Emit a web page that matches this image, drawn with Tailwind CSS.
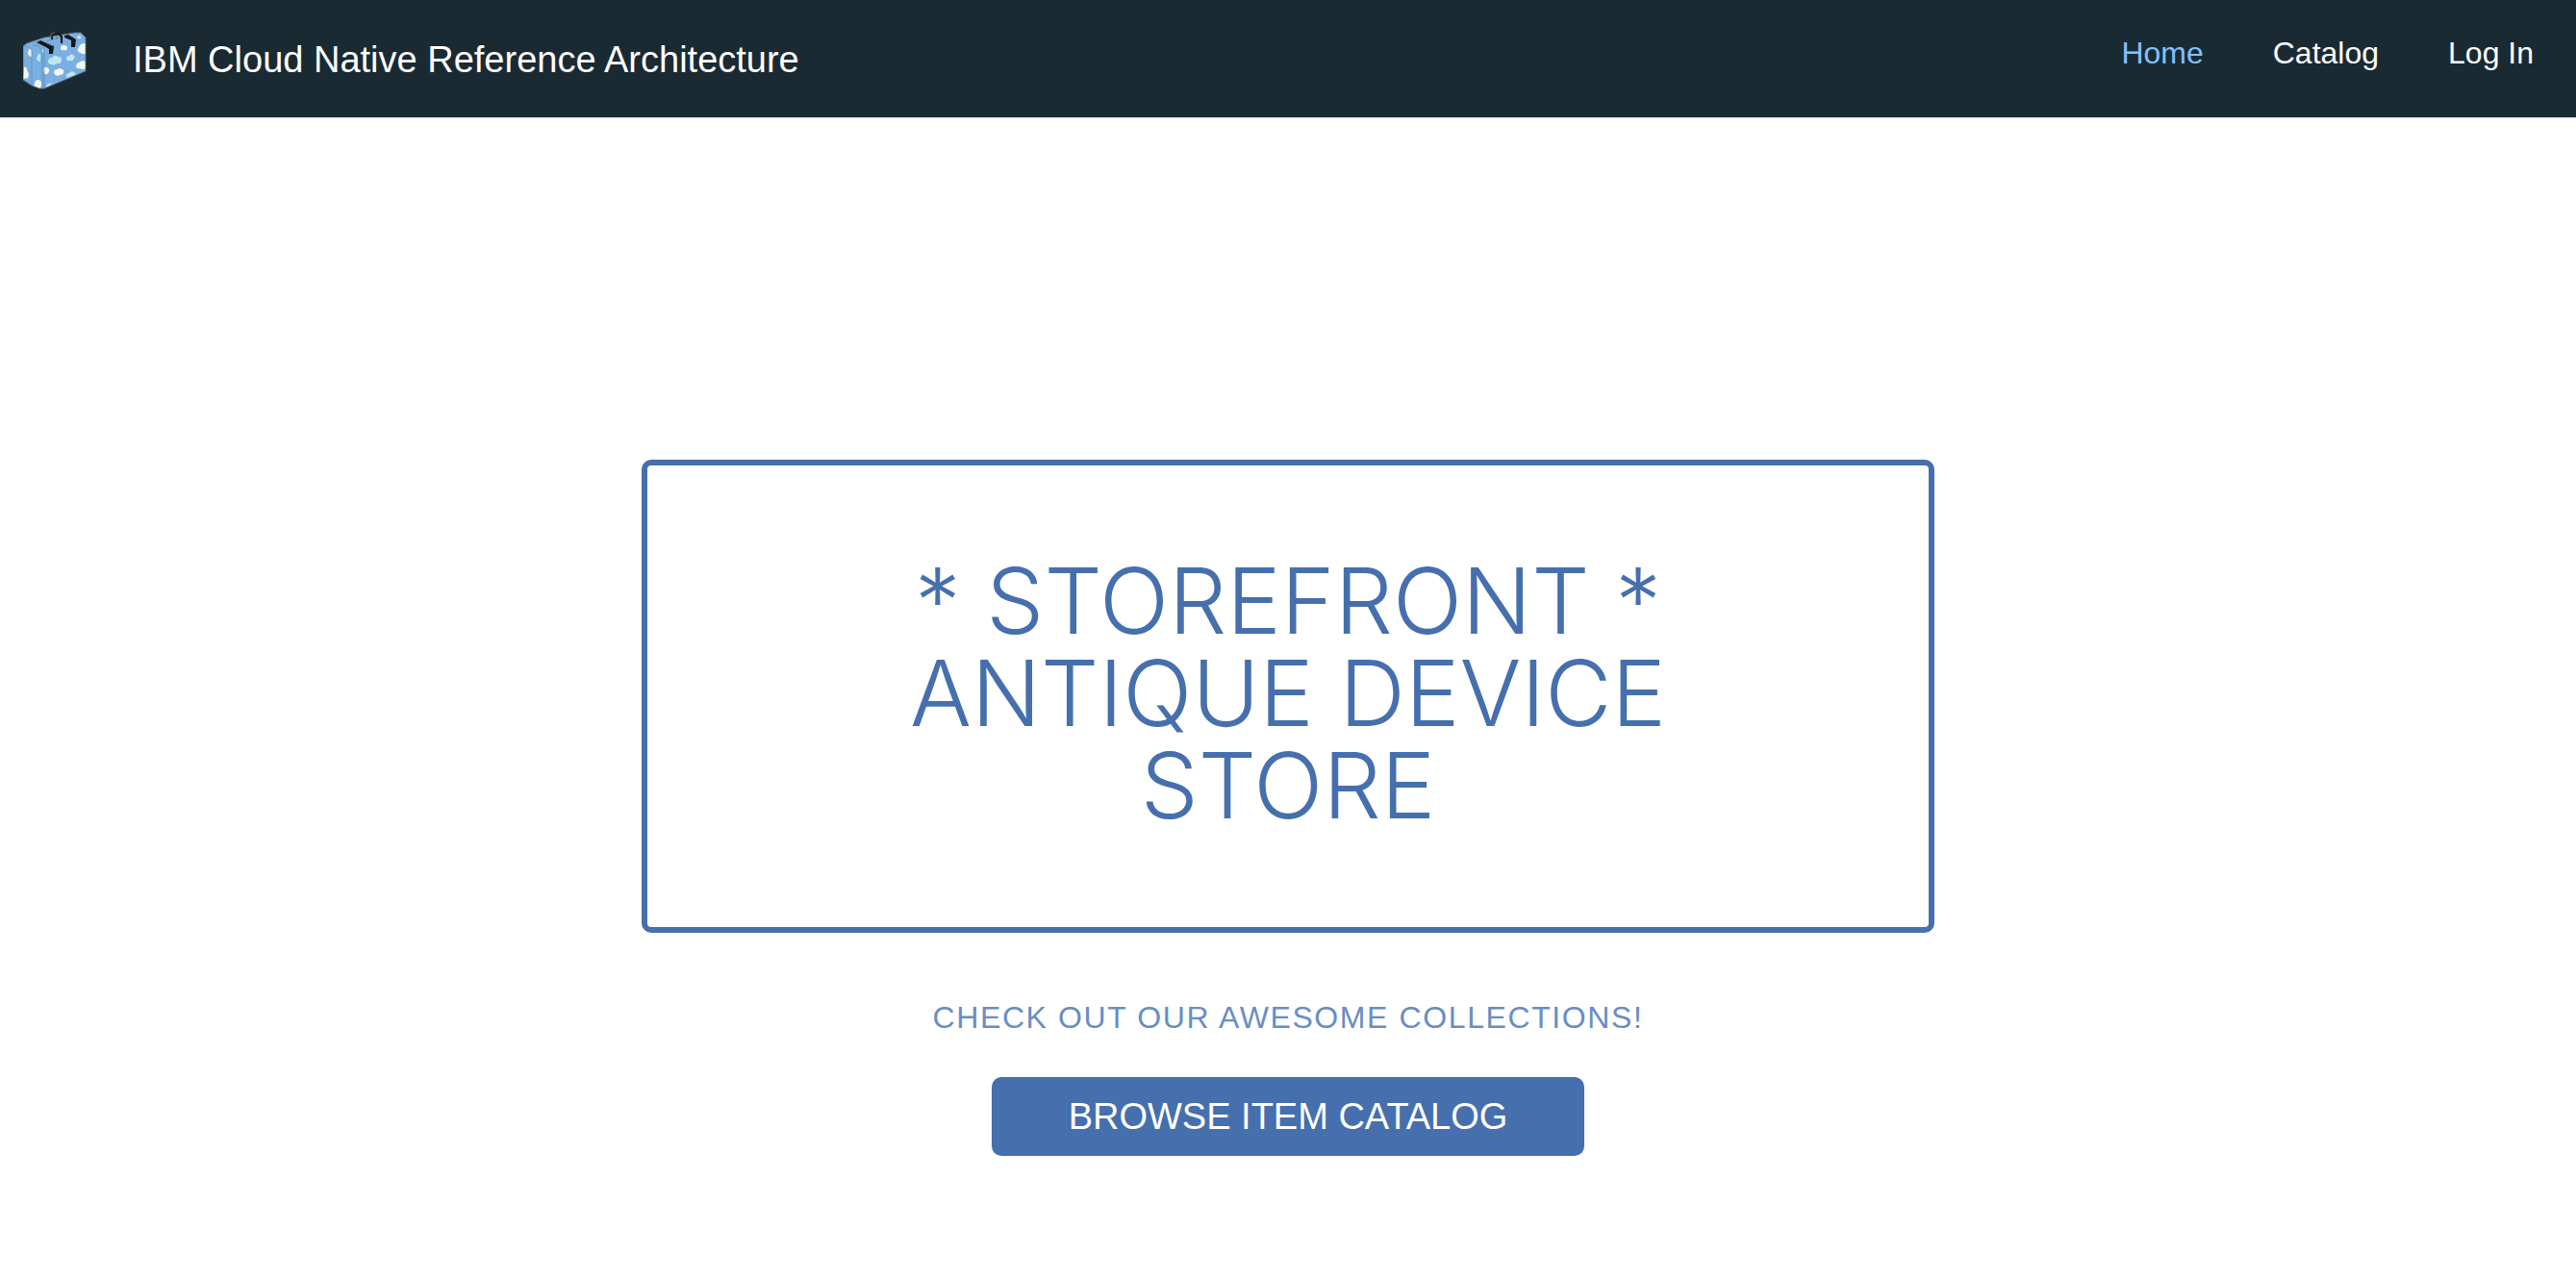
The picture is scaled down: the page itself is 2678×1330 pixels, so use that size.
<!DOCTYPE html>
<html lang="en">
<head>
<meta charset="utf-8">
<meta name="viewport" content="width=device-width, initial-scale=1">
<title>IBM Cloud Native Reference Architecture</title>
<script src="https://cdn.jsdelivr.net/npm/@tailwindcss/browser@4"></script>
</head>
<body class="flex min-h-screen flex-col bg-white font-['Liberation_Sans',Arial,sans-serif]">
<header class="flex h-[122px] shrink-0 items-start justify-between bg-[#1a2a33] pr-11 pl-6 shadow-sm">
  <a href="#" class="flex items-center gap-12 pt-[30px] text-white">
    <svg class="h-16 w-[66px] shrink-0" viewBox="24 30 66 64" aria-hidden="true">
      <defs><clipPath id="case"><path d="M24 48 28 45 46 39 78 34 84 34 89 39 89 74 46 92 41 92 33 89 24 83Z"/></clipPath></defs>
      <g clip-path="url(#case)">
        <path fill="#7aafe1" d="M24 30h66v64H24z"/>
        <g fill="#f5f7ef">
          <path d="M30 51q2-1 3 1v7q-4-1-4-4ZM25 70q3-1 3 3 3 3 1 8l-5 1ZM36 87q0-4 4-4 4 1 3 5l-1 4-7-2ZM45 73q0-4 3-3 4 1 3 4-1 4-5 3ZM63 50q0-3 3-3 4 0 4 3 0 3-4 2-3 1-3-2ZM56 75q0-3 4-3 2-2 4 0 3 0 2 3 0 3-4 3-4 2-5-1-1 0-1-2ZM82 49q1-4 7-4v11q-4 1-5-1-4-1-3-4ZM79 68q1-3 3-3 3-3 7-1v7q-4 2-6 0-4 1-4-3Z"/>
        </g>
        <g fill="#bfe5ef">
          <path d="M39 58q0-2 3-2v8q-4 0-4-4ZM50 64q0-4 4-4 3-4 6-1 5 0 4 4-1 4-5 3-3 3-5 1-4 0-4-3ZM69 61q0-3 3-3 2-3 4-1 3 2 1 4-1 3-4 2-4 1-4-2ZM69 79q0-3 3-3 2-3 5-1 3 2 1 3l-8 3q-1 0-1-2ZM48 89q3-4 6-2l-5 4ZM80 39q1-3 4-2v3q-3 1-4-1ZM43 51q3 0 3 4-3 0-3-4Z"/>
        </g>
      </g>
      <path fill="none" stroke="#5c8dbd" stroke-width=".8" d="M25 48q7 0 8 5v36M34 47q8 0 10 7v37M38 45q8 1 8 8v38M48 43l18-5"/>
      <path fill="none" stroke="#62717c" stroke-width=".8" d="M24 48 28 45 46 39 78 34 84 34 89 39V74L46 92l-5 0-8-3-9-6Z"/>
      <path fill="#14171a" d="m38 44 4-2 14 6-1 8h-4v-5l-5-3ZM67 37l4-1 8 5-1 8h-4v-7l-7-3Z"/>
      <path fill="none" stroke="#1b1b1c" stroke-width="2.2" d="M54 41v-5l7-1 3 3v7"/>
      <path fill="none" stroke="#77797a" stroke-width=".8" d="M53 40v-5l4-1M59 41v-4M45 43l10 5"/>
    </svg>
    <span class="text-[38px] leading-[60px]">IBM Cloud Native Reference Architecture</span>
  </a>
  <nav class="pt-[31px] text-[32px] leading-[48px]">
    <ul class="flex gap-[72px]">
      <li><a href="#" aria-current="page" class="text-[#82c0ff]">Home</a></li>
      <li><a href="#" class="text-white">Catalog</a></li>
      <li><a href="#" class="text-white">Log In</a></li>
    </ul>
  </nav>
</header>
<main class="flex grow flex-col items-center pt-[356px] pb-16 text-center uppercase">
  <h1 class="w-full max-w-[1344px] rounded-[10px] border-6 border-[#466fad] px-48 pt-[93px] pb-[99px] font-[Inter,sans-serif] text-[95px] leading-[96px] font-light text-[#466fad]">* Storefront *<br>Antique Device Store</h1>
  <p class="pt-[62px] text-[32px] leading-[52px] tracking-wider text-[#6a8dc3]">Check out our awesome collections!</p>
  <button type="button" class="mt-9 h-[82px] w-full max-w-[616px] rounded-[10px] bg-[#466fad] text-[38px] leading-[60px] text-white uppercase">Browse Item Catalog</button>
</main>
</body>
</html>
